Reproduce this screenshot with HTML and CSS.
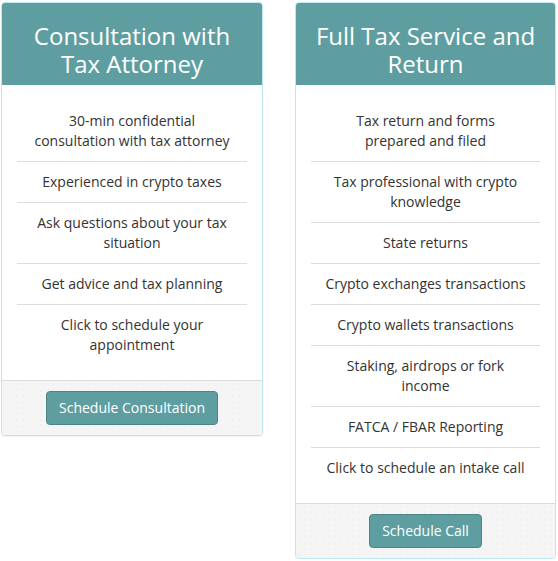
FILE: index.html
```html
<!DOCTYPE html>
<html lang="en">
<head>
    <meta charset="UTF-8">
    <title>Tax Services</title>
    <link rel="stylesheet" href="styles.css">
</head>
<body>
    <div class="plans">
        <div class="plan">
            <h2 class="plan-title">Consultation with Tax Attorney</h2>
            <ul class="plan-features">
                <li>30-min confidential consultation with tax attorney</li>
                <li>Experienced in crypto taxes</li>
                <li>Ask questions about your tax situation</li>
                <li>Get advice and tax planning</li>
                <li>Click to schedule your appointment</li>
            </ul>
            <div class="plan-footer">
                <button type="button" class="plan-btn">Schedule Consultation</button>
            </div>
        </div>

        <div class="plan">
            <h2 class="plan-title">Full Tax Service and Return</h2>
            <ul class="plan-features">
                <li>Tax return and forms prepared and filed</li>
                <li>Tax professional with crypto knowledge</li>
                <li>State returns</li>
                <li>Crypto exchanges transactions</li>
                <li>Crypto wallets transactions</li>
                <li>Staking, airdrops or fork income</li>
                <li>FATCA / FBAR Reporting</li>
                <li>Click to schedule an intake call</li>
            </ul>
            <div class="plan-footer">
                <button type="button" class="plan-btn">Schedule Call</button>
            </div>
        </div>
    </div>
</body>
</html>
```

FILE: styles.css
```css
:root {
    --accent-color: #5f9ea0;
    --text-color: #333333;
    --border-color: #bce8f1;
    --line-color: #dddddd;
}
body {
    margin: 0;
    font-family: 'Open Sans', sans-serif;
    font-size: 14px;
    line-height: 20px;
    color: var(--text-color);
    background-color: #ffffff;
}
.plans {
    display: flex;
    align-items: flex-start;
    gap: 32px;
    padding: 2px 0 0 1px;
}
.plan {
    width: 262px;
    box-sizing: border-box;
    border: 1px solid var(--border-color);
    border-radius: 4px;
    overflow: hidden;
    box-shadow: 0 1px 1px rgba(0, 0, 0, 0.05);
}
.plan + .plan {
    width: 261px;
}
.plan-title {
    margin: -1px -1px 0;
    padding: 20px 18px 7px;
    background-color: var(--accent-color);
    color: #ffffff;
    text-align: center;
    font-size: 24px;
    line-height: 28px;
    font-weight: 400;
}
.plan-features {
    list-style: none;
    margin: 0;
    padding: 16px 15px 15px;
    text-align: center;
}
.plan-features li {
    padding: 10px 14px;
    border-bottom: 1px solid var(--line-color);
}
.plan-features li:last-child {
    border-bottom: none;
}
.plan-footer {
    padding: 10px 15px;
    background-color: #f5f5f5;
    background-image: radial-gradient(circle, #ebebeb 0.6px, transparent 0.8px);
    background-size: 6px 6px;
    border-top: 1px solid var(--line-color);
    text-align: center;
}
.plan-btn {
    padding: 6px 12px;
    border: 1px solid #4d8587;
    border-radius: 4px;
    background-color: var(--accent-color);
    color: #ffffff;
    font-family: 'Open Sans', sans-serif;
    font-size: 14px;
    line-height: 20px;
    cursor: pointer;
}
```
